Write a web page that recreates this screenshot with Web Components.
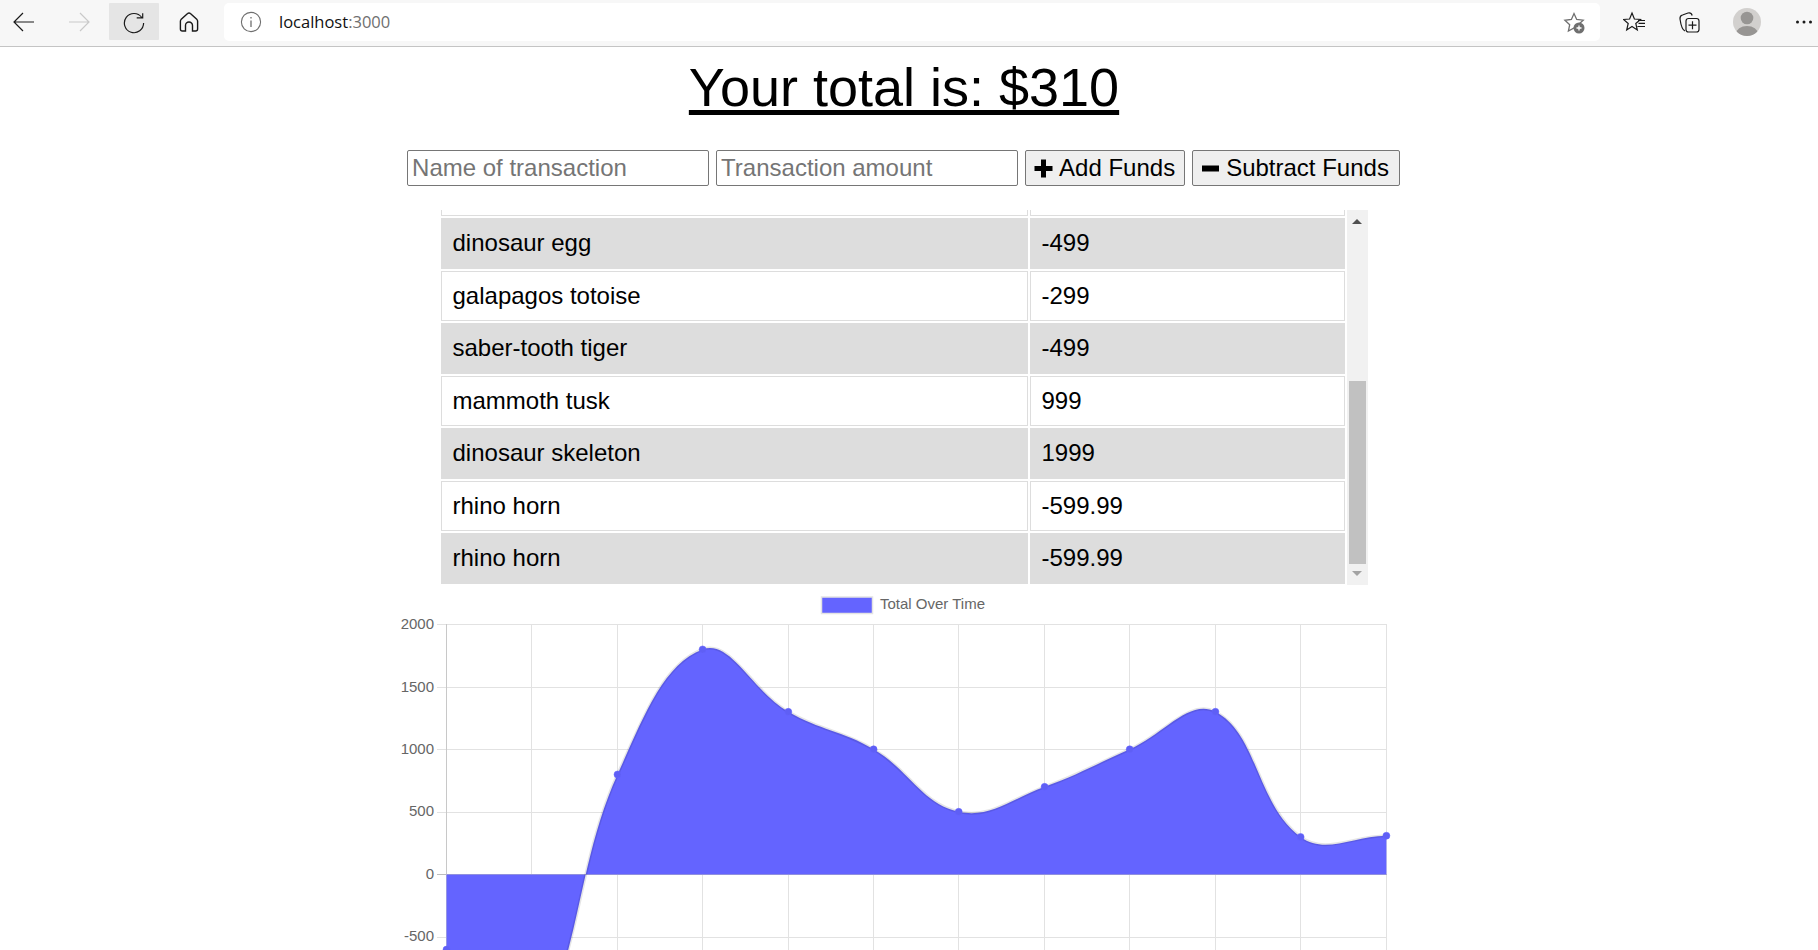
<!DOCTYPE html>
<html><head><meta charset="utf-8"><style>
html,body{margin:0;height:950px;overflow:hidden;background:#fff;font-family:"Liberation Sans",Arial,sans-serif}
</style></head><body>
<browser-bar></browser-bar>
<budget-app total="310"></budget-app>
<script>
class BrowserBar extends HTMLElement{constructor(){super();this.attachShadow({mode:'open'}).innerHTML=`<style>
:host{display:flex;align-items:flex-start;height:46px;padding-top:0;background:#f7f7f7;border-bottom:1px solid #c4c4c4;box-sizing:content-box;font-family:"Open Sans",sans-serif}
.b{width:50px;height:37px;margin-top:3px;display:flex;align-items:center;justify-content:center;flex:none;margin-left:5px;border-radius:1px}
.act{background:#e5e5e5}
svg{display:block;fill:none;stroke:#1a1a1a;stroke-width:1.4}
.addr{flex:1;height:38px;margin-top:3px;background:#fff;border-radius:5px;display:flex;align-items:center;margin-left:10px;padding:0 13px 0 16px;min-width:0}
.url{margin-left:17px;margin-top:-2px;font-size:16.500px;color:#111}.url span{color:#6f6f6f}
.sp{flex:1}
.r{display:flex;flex:none;align-items:flex-start;margin-right:-11px}
.r .b{margin-left:6px}
</style>
<div class="b" style="margin-left:-1px"><svg width="24" height="20" viewBox="0 0 24 20" style="stroke-width:1.200"><path d="M2 10H22M11 1 2 10l9 9"/></svg></div>
<div class="b"><svg width="24" height="20" viewBox="0 0 24 20" style="stroke:#c9c9c9;stroke-width:1.200"><path d="M2 10H22M13 1 22 10l-9 9"/></svg></div>
<div class="b act"><svg width="24" height="24" viewBox="0 0 24 24" style="stroke-width:1.200"><path d="M21.600 13A9.600 9.600 0 1 1 19.800 7.500M20.700 3.200V7.800H14.700"/></svg></div>
<div class="b"><svg width="22" height="22" viewBox="0 0 22 22"><path d="M9.600 2.600a2 2 0 0 1 2.800 0L19 8.600a2.500 2.500 0 0 1 .6 1.600V18a2 2 0 0 1-2 2H14.500V14.500a3.500 3.500 0 0 0-7 0V20H4.400a2 2 0 0 1-2-2V10.200a2.500 2.500 0 0 1 .6-1.600Z"/></svg></div>
<div class="addr">
<svg width="22" height="22" viewBox="0 0 22 22" style="stroke:#6f6f6f;stroke-width:1.100"><circle cx="11" cy="11" r="9.600"/><path d="M11 9.500V16M11 6v1.400" stroke-width="1.300"/></svg>
<div class="url">localhost<span>:3000</span></div><div class="sp"></div>
<svg width="24" height="24" viewBox="0 0 24 24" style="stroke:#6f6f6f;stroke-width:1.300;margin-top:2px"><path d="M11 2.500l2.700 6 6.500.7-4.800 4.300 1.200 6.300L11 17l-5.600 3.100 1.300-6.400L1.900 9.300l6.500-.8Z" /><circle cx="16" cy="17" r="5.500" fill="#6f6f6f" stroke="none"/><path d="M13.500 17h5M16 14.500v5" stroke="#fff" stroke-width="1.300"/></svg>
</div>
<div class="r">
<div class="b" style="margin-left:8px"><svg width="24" height="24" viewBox="0 0 24 24" style="margin-left:4px;stroke-width:1.200"><path d="M9 3l2.400 6 6.100.5-4.700 4 1.500 6.500L9 16.500 3.700 20l1.500-6.500L.5 9.500l6.100-.5ZM15 10.500h7M15.500 13.300h6.500M14.500 16.500h7.500"/></svg></div>
<div class="b"><svg width="24" height="24" viewBox="0 0 24 24" style="stroke-width:1.200"><path d="M8 21C5 20 4 16 3 9 2.800 7 3.500 5.500 5.500 5L11 3c2-.5 3.500 0 4.200 2.500"/><rect x="9" y="8.500" width="13" height="13.500" rx="2.500"/><path d="M15.500 11.200v8M11.500 15.200h8"/></svg></div>
<div class="b" style="margin-left:8px"><svg width="28" height="28" viewBox="0 0 28 28" style="stroke:none"><clipPath id="c"><circle cx="14" cy="14" r="14"/></clipPath><g clip-path="url(#c)"><rect width="28" height="28" fill="#d2d0ce"/><circle cx="14" cy="10" r="6.300" fill="#979593"/><ellipse cx="14" cy="26" rx="11" ry="8" fill="#979593"/></g></svg></div>
<div class="b" style="margin-left:7px"><svg width="18" height="6" viewBox="0 0 18 6" style="stroke:none;fill:#1a1a1a"><circle cx="2.500" cy="3" r="1.500"/><circle cx="9" cy="3" r="1.500"/><circle cx="15.500" cy="3" r="1.500"/></svg></div>
</div>`}}
customElements.define('browser-bar',BrowserBar);

class FundButton extends HTMLElement{constructor(){super();this.attachShadow({mode:'open'}).innerHTML=`<style>
:host{display:inline-flex;align-items:center;box-sizing:border-box;height:36px;border:1px solid #767676;border-radius:2px;background:#efefef;padding:0 9px 0 8px;font-size:24px;color:#000;white-space:nowrap;line-height:1}
:host([icon=minus]){padding-right:10px}
svg{display:block;margin-right:6px;flex:none}
</style><svg width="19" height="19" viewBox="0 0 19 19"><path id="p" fill="#000"/></svg><slot></slot>`;
}connectedCallback(){this.shadowRoot.getElementById('p').setAttribute('d',this.getAttribute('icon')==='minus'?'M1 6.500h17v6H1Z':'M7 .5h5v6.500h6.500v5H12v6.500H7V12H.5V7H7Z')}}
customElements.define('fund-button',FundButton);

class TxRow extends HTMLElement{constructor(){super();this.attachShadow({mode:'open'}).innerHTML=`<style>
:host{display:grid;grid-template-columns:587px 315px;column-gap:2px;height:50.5px;font-size:24px;color:#000}
:host([alt]) .c{background:#ddd}
.c{box-sizing:border-box;border:1px solid #ddd;padding:0 11px;display:flex;align-items:center;white-space:nowrap}
</style><div class="c"><slot name="n"></slot></div><div class="c"><slot name="v"></slot></div>`}}
customElements.define('tx-row',TxRow);

class TxTable extends HTMLElement{constructor(){super();this.attachShadow({mode:'open'}).innerHTML=`<style>
:host{display:flex;width:927px;height:375px;background:#fff}
.list{width:904px;flex:none;overflow:hidden;display:flex;flex-direction:column;gap:2px}
.cut{flex:none;height:6px;display:grid;grid-template-columns:587px 315px;column-gap:2px}
.cut div{border:1px solid #ddd;border-top:0;box-sizing:border-box}
.bar{width:21px;margin-left:2px;background:#f1f1f1;position:relative;flex:none;display:flex;flex-direction:column;align-items:center}
.up,.dn{width:0;height:0;border-left:5px solid transparent;border-right:5px solid transparent;flex:none}
.up{border-bottom:5px solid #505050;margin-top:9px}
.th{width:17px;height:183px;background:#c1c1c1;margin-top:157px;flex:none}
.dn{border-top:5px solid #a3a3a3;margin-top:7px}
</style><div class="list"><div class="cut"><div></div><div></div></div><slot></slot></div>
<div class="bar"><div class="up"></div><div class="th"></div><div class="dn"></div></div>`}}
customElements.define('tx-table',TxTable);

class LineChart extends HTMLElement{constructor(){super();this.attachShadow({mode:'open'})}
connectedCallback(){
const xs=[446.5,531.7,617.5,702.6,788.3,873.6,958.7,1044.6,1129.7,1215.4,1300.6,1386.4];
const vals=[-599.99,-1199.98,799,1798,1299,1000,501,700,1000,1300,300,310];
const X0=380;const Y0=590;
const py=v=>874.5-v*62.6/500;
const P=xs.map((x,i)=>({x,y:py(vals[i])}));
const t=.4;
P.forEach((p,i)=>{const a=P[i-1]||p,b=P[i+1]||p;const d1=Math.hypot(p.x-a.x,p.y-a.y),d2=Math.hypot(b.x-p.x,b.y-p.y);const s=d1+d2||1;const fa=t*d1/s,fb=t*d2/s;p.cpx=p.x-fa*(b.x-a.x);p.cpy=p.y-fa*(b.y-a.y);p.nx=p.x+fb*(b.x-a.x);p.ny=p.y+fb*(b.y-a.y)});
let d=`M${P[0].x} ${P[0].y}`;for(let i=1;i<P.length;i++){const a=P[i-1],b=P[i];d+=`C${a.nx} ${a.ny} ${b.cpx} ${b.cpy} ${b.x} ${b.y}`}
const fill=d+`L1386.400 874.500L446.500 874.500Z`;
const gx=xs.map(x=>`<path d="M${Math.round(x-.5)+.5} 624V1000"/>`).join('');
const ticks=[2000,1500,1000,500,0,-500];
const ys={2000:624.5,1500:687.5,1000:749.5,500:812.5,0:874.5,'-500':937.5};
const by={2000:628.5,1500:691.5,1000:753.5,500:815.5,0:878.5,'-500':940.5};
const gy=ticks.map(v=>`<path d="M437 ${ys[v]}H1387" ${v===0?'stroke="#bdbdbd"':''}/>`).join('');
const lab=ticks.map(v=>`<text x="434" y="${by[v]}" text-anchor="end">${v}</text>`).join('');
const dots=P.map(p=>`<circle cx="${p.x}" cy="${p.y}" r="3.500"/>`).join('');
this.shadowRoot.innerHTML=`<style>
:host{display:block;height:400px;width:1100px}
svg{display:block;overflow:hidden}
text{font-family:"Liberation Sans",Arial,sans-serif;font-size:15px;fill:#666}
.grid{stroke:#e2e2e2;stroke-width:1;fill:none}
</style><svg width="1100" height="400" viewBox="${X0} ${Y0} 1100 400" role="img">
<g class="grid">${gx}${gy}</g>
<path d="M446.500 624V1000" stroke="#c8c8c8"/>
<path d="${fill}" fill="#6464ff"/>
<path d="${d}" fill="none" stroke="#000" stroke-opacity=".1" stroke-width="3"/>
<g fill="#5f5ff5" stroke="#6464ff" stroke-opacity=".5" stroke-width="1">${dots}</g>
<rect x="821.500" y="597" width="51" height="16.500" fill="#6464ff" stroke="#e3e3e3" stroke-width="1.500"/>
<text x="880" y="609">Total Over Time</text>
${lab}
</svg>`}}
customElements.define('line-chart',LineChart);

class BudgetApp extends HTMLElement{constructor(){super();this.attachShadow({mode:'open'}).innerHTML=`<style>
:host{display:flex;flex-direction:column;align-items:center;width:1808px;color:#000;font-family:"Liberation Sans",Arial,sans-serif}
h1{margin:0;font-size:54px;font-weight:400;text-decoration:underline;text-decoration-thickness:4.500px;text-underline-offset:4px;line-height:64px;padding-top:8px;height:95px;box-sizing:content-box;white-space:nowrap}
.form{display:flex;gap:7px;height:36px;margin-left:-1px}
input{box-sizing:border-box;width:302px;height:36px;border:1px solid #767676;border-radius:2px;padding:0 4px;margin:0;font:24px "Liberation Sans",Arial,sans-serif;background:#fff;outline:0}
input::placeholder{color:#757575;opacity:1}
tx-table{margin-top:24px}
line-chart{margin-top:5px;align-self:flex-start;margin-left:380px}
</style>
<h1 id="t"></h1>
<div class="form"><input placeholder="Name of transaction"><input placeholder="Transaction amount">
<fund-button icon="plus">Add Funds</fund-button><fund-button icon="minus">Subtract Funds</fund-button></div>
<tx-table></tx-table><line-chart></line-chart>`}
connectedCallback(){this.shadowRoot.getElementById('t').textContent='Your total is: $'+this.getAttribute('total');
const rows=[['dinosaur egg','-499'],['galapagos totoise','-299'],['saber-tooth tiger','-499'],['mammoth tusk','999'],['dinosaur skeleton','1999'],['rhino horn','-599.99'],['rhino horn','-599.99']];
const tb=this.shadowRoot.querySelector('tx-table');
rows.forEach((r,i)=>{const e=document.createElement('tx-row');if(i%2==0)e.setAttribute('alt','');const a=document.createElement('span');a.slot='n';a.textContent=r[0];const b=document.createElement('span');b.slot='v';b.textContent=r[1];e.append(a,b);tb.append(e)})}}
customElements.define('budget-app',BudgetApp);
</script></body></html>
